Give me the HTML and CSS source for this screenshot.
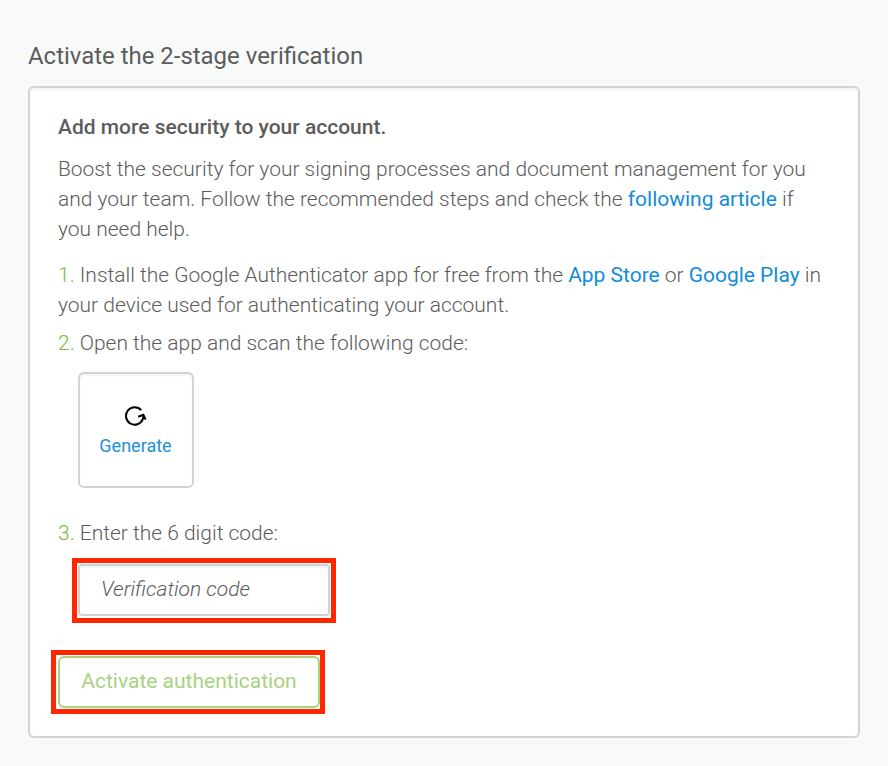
FILE: index.html
```html
<!DOCTYPE html>
<html lang="en">
<head>
<meta charset="utf-8">
<title>2-stage verification</title>
<link rel="stylesheet" href="styles.css">
</head>
<body>
<h1>Activate the 2-stage verification</h1>
<main class="card">
<h2>Add more security to your account.</h2>
<p class="intro">Boost the security for your signing processes and document management for you<br>and your team. Follow the recommended steps and check the <a>following article</a> if<br>you need help.</p>
<p class="step"><span class="num">1.</span> Install the Google Authenticator app for free from the <a>App Store</a> or <a>Google Play</a> in<br>your device used for authenticating your account.</p>
<p class="step"><span class="num">2.</span> Open the app and scan the following code:</p>
<button class="generate">
<svg width="24" height="22" viewBox="0 0 24 22" fill="none" stroke="#000" stroke-width="2"><path d="M17.2 6.2A8.7 8.7 0 1 0 18.8 15.2Q19.5 13.5 19.5 11M14.2 12.8L19.4 10.8L21.6 15.6"/></svg>
<span>Generate</span>
</button>
<p class="step last"><span class="num">3.</span> Enter the 6 digit code:</p>
<div class="mark mark-code"><input class="code" placeholder="Verification code"></div>
<div class="mark mark-activate"><button class="activate">Activate authentication</button></div>
</main>
</body>
</html>
```
FILE: styles.css
```css
* { box-sizing: border-box; }
body { margin: 0; padding: 41px 28px 28px; min-height: 766px; background: #f8faf9; color: #5c5c5c; font-family: Roboto, sans-serif; }
h1 { margin: 0 0 15px; font-size: 23.95px; line-height: 30px; font-weight: 400; }
.card { height: 652px; padding: 24px 28px; background: #fff; border: 2px solid #d3d3d3; border-radius: 6px; box-shadow: inset 0 2px 2px #f5f5f5; font-size: 20.98px; line-height: 30px; font-weight: 300; }
h2 { margin: 0 0 12px; font-size: 21px; line-height: 30px; font-weight: 500; }
p { margin: 0; white-space: nowrap; }
.intro { margin-bottom: 16px; }
.step { margin-bottom: 8px; }
.num { color: #76bd38; }
a { color: #128cd8; font-weight: 400; }
button { font-family: inherit; background: #fff; }
.generate { display: flex; flex-direction: column; align-items: center; width: 116px; height: 116px; margin: 14px 0 30px 20px; padding: 30px 1px 0 0; border: 2px solid #d3d3d3; border-radius: 6px; box-shadow: inset 0 2px 2px #f5f5f5; color: #1a92d9; font-size: 18px; line-height: 24px; }
.generate svg { margin-left: 1px; }
.generate span { margin-top: 8px; }
.mark { border: 5px solid #ff2600; padding: 1px; }
.mark-code { width: 264px; height: 65px; margin: 10px 0 0 14px; }
.code { display: block; width: 252px; height: 52px; padding: 0 20px 2px 21px; border: 2px solid #d3d3d3; border-radius: 4px; box-shadow: inset 0 2px 2px #f5f5f5; font: italic 300 21px Roboto, sans-serif; }
.code::placeholder { color: #5c5c5c; }
.mark-activate { width: 274px; height: 64px; margin: 27px 0 0 -7px; padding-left: 2px; }
.activate { display: block; width: 262px; height: 52px; padding: 0 0 2px; border: 2px solid #aad17f; border-radius: 6px; color: #aad17f; font-size: 21px; }
```
